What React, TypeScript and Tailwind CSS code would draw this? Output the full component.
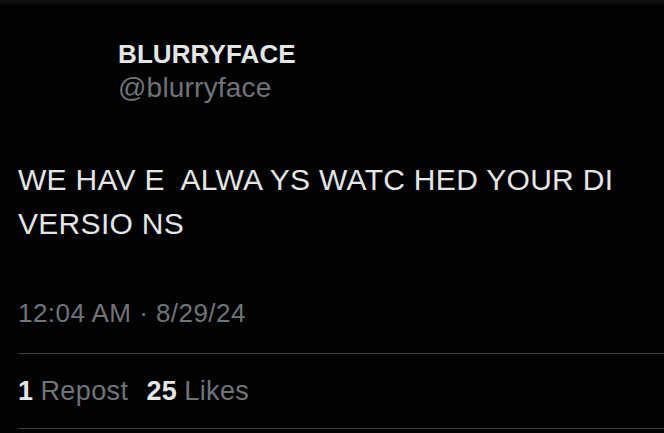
import React from "react";

export default function App() {
  const font = { fontFamily: '"Liberation Sans", Arial, Helvetica, sans-serif' };
  return (
    <div className="w-[664px] h-[433px] bg-[#020202] overflow-hidden flex flex-col" style={font}>
      <div className="h-[5px] w-full bg-gradient-to-b from-[#111111] to-[#080808]" />
      <div className="pl-[118px] pt-[34px] flex flex-col">
        <div className="text-[26px] leading-[30px] font-bold text-[#e3e5e6] tracking-[0.1px]">BLURRYFACE</div>
        <div className="mt-[3px] text-[28px] leading-[32px] text-[#6f7479] tracking-[0.2px]">@blurryface</div>
      </div>
      <div className="pl-[18px] pr-[20px] mt-[54px] text-[30px] leading-[44px] text-[#e3e5e6] tracking-[0.3px] whitespace-pre-wrap">
        {"WE HAV E  ALWA YS WATC HED YOUR DI\nVERSIO NS"}
      </div>
      <div className="pl-[18px] mt-[52px] text-[26px] leading-[30px] text-[#6f7479] tracking-[0.45px]">
        12:04 AM · 8/29/24
      </div>
      <div className="ml-[18px] mt-[25px] h-px bg-[#3e3e3e]" />
      <div className="pl-[18px] mt-[22px] text-[27px] leading-[30px] tracking-[0.4px] flex items-baseline">
        <span className="font-bold text-[#e3e5e6]">1</span>
        <span className="ml-[7px] text-[#6f7479]">Repost</span>
        <span className="ml-[18px] font-bold text-[#e3e5e6]">25</span>
        <span className="ml-[7px] text-[#6f7479]">Likes</span>
      </div>
      <div className="ml-[18px] mt-[22px] h-px bg-[#3e3e3e]" />
    </div>
  );
}
